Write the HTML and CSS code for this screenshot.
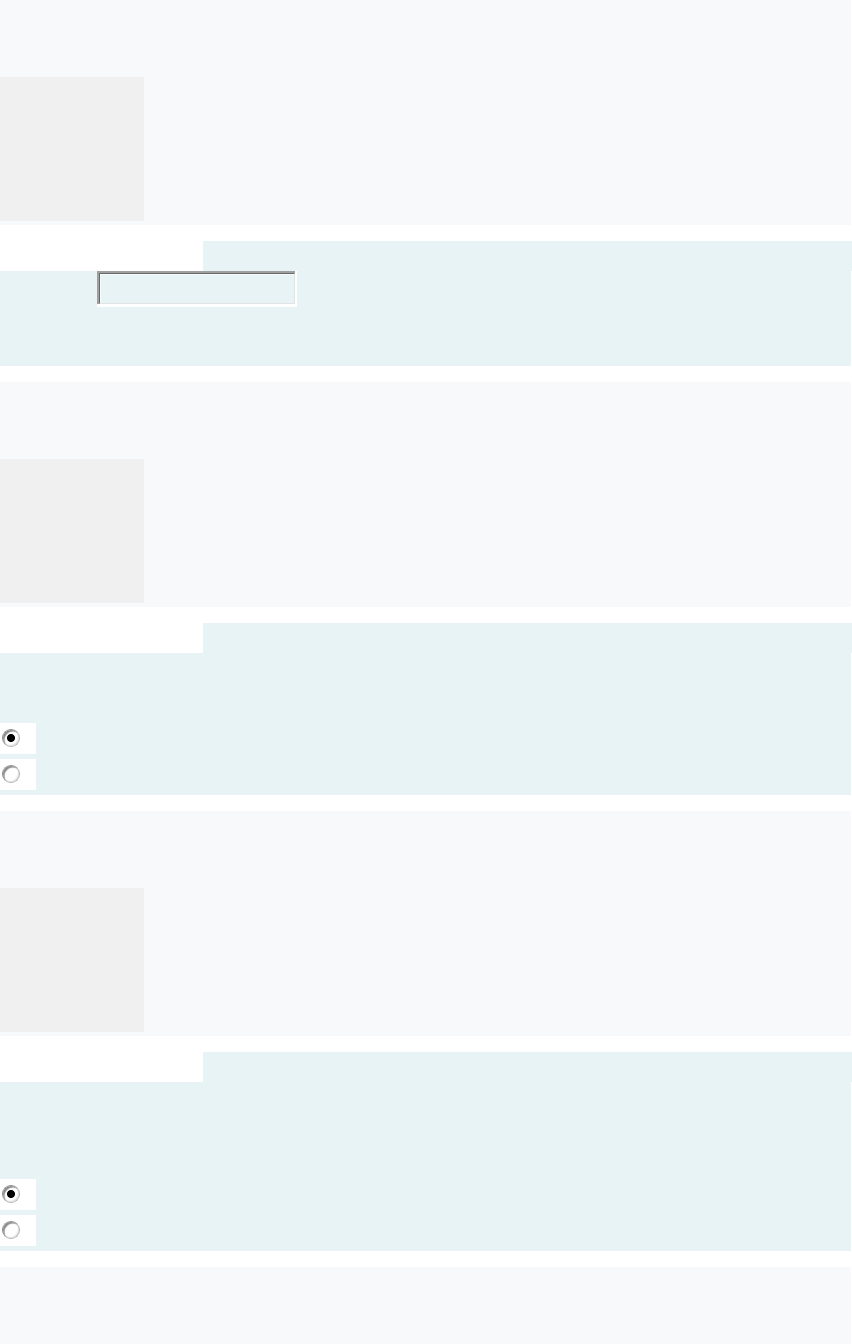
FILE: index.html
```
<!DOCTYPE html>
<html lang="en">

<head>
	<meta charset="utf-8">
	<title>Quiz</title>
	<link rel="stylesheet" href="styles.css">
</head>

<body>
	<form>
		<div class="info">
			<div class="info-box"></div>
		</div>
		<div class="question">
			<div class="question-head"></div>
			<div class="question-body">
				<div class="answer-field">
					<div class="answer-frame">
						<input type="text" class="answer-text" aria-label="Answer">
					</div>
				</div>
			</div>
		</div>

		<div class="info">
			<div class="info-box"></div>
		</div>
		<div class="question">
			<div class="question-head"></div>
			<div class="question-body choices">
				<label class="choice"><input type="radio" name="q2" checked></label>
				<label class="choice"><input type="radio" name="q2"></label>
			</div>
		</div>

		<div class="info">
			<div class="info-box"></div>
		</div>
		<div class="question">
			<div class="question-head"></div>
			<div class="question-body choices tall">
				<label class="choice"><input type="radio" name="q3" checked></label>
				<label class="choice"><input type="radio" name="q3"></label>
			</div>
		</div>

		<div class="info last"></div>
	</form>
</body>

</html>
```
FILE: styles.css
```
* {
	box-sizing: border-box;
}

body {
	margin: 0;
	background-color: #fff;
	font-family: "Liberation Sans", Arial, sans-serif;
}

.info {
	height: 225px;
	margin-right: 1px;
	margin-bottom: 16px;
	padding-top: 77px;
	background-color: #f8f9fb;
}

.info.last {
	height: 77px;
	margin-bottom: 0;
}

.info-box {
	width: 144px;
	height: 144px;
	background-color: #f0f0f0;
}

.question {
	margin-bottom: 16px;
}

.question-head {
	height: 30px;
	margin-left: 203px;
	background-color: #e7f3f5;
}

.question-body {
	height: 95px;
	margin-right: 1px;
	background-color: #e7f3f5;
}

.question-body.choices {
	display: flex;
	flex-direction: column;
	gap: 5px;
	height: 142px;
	padding-top: 70px;
}

.question-body.tall {
	height: 169px;
	padding-top: 97px;
}

/* sunken text field */
.answer-field {
	width: 200px;
	height: 36px;
	margin-left: 97px;
	padding: 0 2px 3px 0;
	background-color: #fff;
}

.answer-frame {
	height: 33px;
	padding: 2px 0 0 2px;
	background-color: #a0a0a0;
}

.answer-text {
	display: block;
	width: 196px;
	height: 31px;
	margin: 0;
	padding: 0 4px;
	border: 1px solid;
	border-color: #696969 #e3e3e3 #e3e3e3 #696969;
	border-radius: 0;
	outline: none;
	background-color: #e7f3f5;
	box-shadow: inset 1px 1px 0 #f5fafb;
}

.choice {
	display: block;
	width: 36px;
	height: 31px;
	padding: 6px 0 0 2px;
	background-color: #fff;
}

/* ring is dark at the top left, with a thin grey rim at the bottom right */
.choice input {
	appearance: none;
	display: block;
	width: 18px;
	height: 18px;
	margin: 0;
	border: 1px solid;
	border-color: #8c8c8c #b4b4b4 #b4b4b4 #8c8c8c;
	border-radius: 50%;
	background-color: #fff;
	box-shadow: inset 2px 2px 1px -0.5px #8c8c8c, inset -1px -1px 1px #e3e3e3;
}

.choice input:checked {
	background-image: radial-gradient(circle, #000 3.6px, transparent 4.4px);
}
```
